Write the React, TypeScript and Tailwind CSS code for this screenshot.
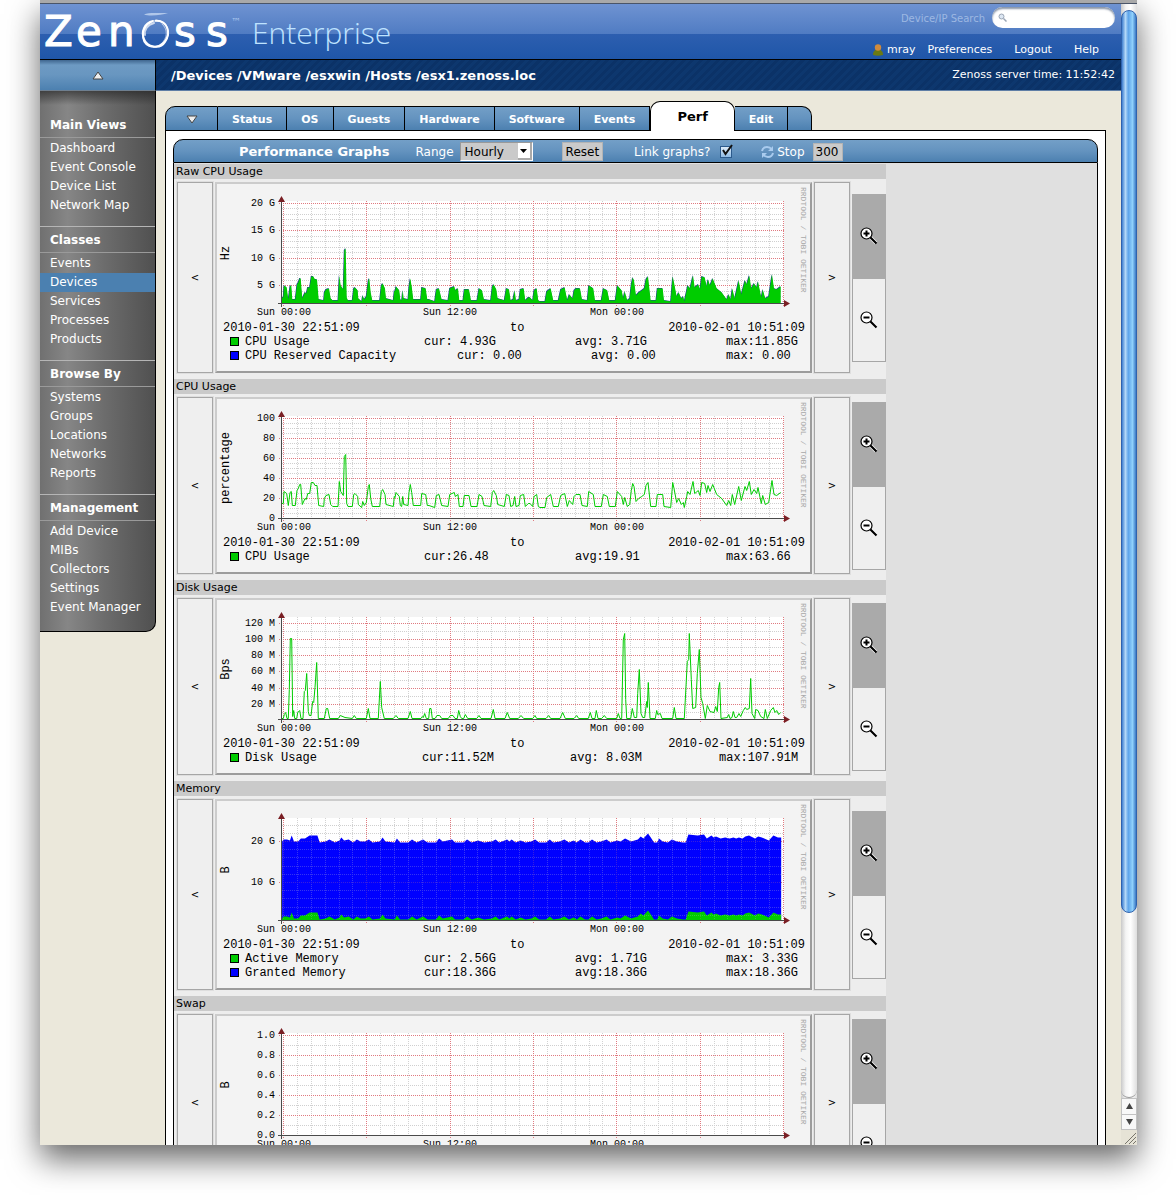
import React from "react";

type Point = [number, number];

interface Series {
  kind: "area" | "line";
  color: string;
  points: Point[];
}

interface LegendRow {
  color: string;
  name: string;
  cur: [number, string];
  avg: [number, string];
  max: [number, string];
}

interface Graph {
  title: string;
  unit: string;
  height: number;
  major: [number, string][];
  minorStep: number;
  series: Series[];
  legend: LegendRow[];
  gridOver?: boolean;
}

const GREEN = "#00cc00";
const BLUE = "#0000ff";
const LEFT = 65;
const RIGHT = 567;
const TOP = 17;
const BASE = 119;

// flat x,height list -> points inside the graph
const plot = (flat: number[], scale: number, shift: number): Point[] => {
  const out: Point[] = [];
  for (let i = 0; i < flat.length; i += 2) {
    out.push([flat[i] / scale + shift, flat[i + 1]]);
  }
  return out;
};

const raise = (points: Point[], by: number): Point[] =>
  points.map(([x, h]) => [x, Math.max(1, h + by)]);

const cpu: Point[] = [
  ...plot(
    [
      351, 15, 355, 15, 357, 27, 365, 25, 370, 13, 375, 26, 379, 27, 382, 13,
      391, 13, 396, 28, 400, 30, 404, 34, 407, 34, 412, 14, 420, 20, 424, 19,
      428, 25, 434, 25, 439, 36, 445, 36, 450, 33, 456, 33, 461, 13, 476, 12,
      478, 20, 483, 23, 492, 24, 497, 14, 503, 12, 519, 12, 523, 37, 527, 27,
      535, 23, 538, 62, 542, 64, 545, 15, 549, 12, 562, 12, 566, 24, 570, 25,
      578, 22, 580, 14, 590, 11, 593, 17, 598, 13, 604, 16, 610, 32, 613, 34,
      617, 20, 622, 12, 644, 12, 649, 27, 653, 29, 660, 24, 663, 14, 685, 12,
      688, 22, 690, 21, 693, 26, 703, 22, 706, 13, 710, 12, 713, 22, 716, 14,
      729, 13, 732, 26, 736, 34, 740, 26, 745, 13, 767, 13, 770, 25, 782, 24,
      787, 13, 792, 13, 809, 11, 814, 23, 822, 24, 830, 13, 849, 12, 854, 24,
      868, 26, 871, 22, 879, 24, 883, 12, 894, 12, 898, 23, 912, 23, 918, 12,
      936, 12, 942, 24, 951, 22, 957, 13, 977, 12, 982, 26, 986, 28, 994, 23,
      998, 14, 1018, 12, 1024, 24, 1032, 23, 1037, 12, 1044, 13, 1049, 22,
      1053, 12, 1062, 13, 1066, 23, 1076, 24, 1081, 12, 1090, 15, 1095, 15,
    ],
    3,
    -52
  ),
  ...plot(
    [
      8, 12, 12, 22, 20, 24, 25, 12, 30, 11, 45, 11, 50, 21, 62, 24, 70, 12,
      85, 12, 92, 23, 104, 25, 112, 12, 118, 18, 128, 14, 132, 22, 138, 24,
      150, 24, 156, 13, 172, 12, 176, 27, 190, 24, 195, 12, 214, 12, 220, 24,
      232, 22, 238, 12, 256, 12, 262, 27, 275, 22, 280, 14, 284, 21, 292, 12,
      299, 14, 304, 28, 308, 35, 312, 32, 318, 17, 326, 20, 335, 22, 343, 24,
      348, 33, 354, 36, 362, 12, 378, 12, 382, 24, 398, 24, 402, 12, 422, 11,
      428, 36, 432, 30, 440, 16, 446, 20, 454, 14, 460, 16, 463, 11, 470, 22,
      473, 27, 480, 24, 489, 37, 494, 25, 505, 28, 510, 23, 515, 36, 524, 35,
      530, 26, 534, 33, 540, 27, 548, 34, 560, 24, 575, 20, 590, 13, 596, 18,
      602, 13, 607, 24, 614, 14, 626, 32, 634, 18, 645, 32, 650, 28, 658, 37,
      664, 24, 672, 29, 680, 25, 684, 31, 694, 15, 698, 23, 706, 14, 716, 16,
      726, 38, 732, 24, 740, 23, 752, 26,
    ],
    3,
    313
  ),
];

const disk: Point[] = [
  ...plot(
    [
      351, 1, 355, 1, 358, 5, 362, 7, 366, 1, 370, 1, 373, 30, 376, 81, 380,
      81, 383, 3, 386, 9, 389, 1, 395, 1, 398, 7, 404, 9, 408, 1, 414, 1, 418,
      28, 421, 29, 425, 46, 430, 8, 433, 4, 438, 4, 443, 18, 446, 17, 450, 32,
      455, 57, 460, 1, 478, 1, 484, 11, 488, 11, 494, 1, 520, 1, 526, 4, 540,
      2, 562, 1, 568, 4, 574, 1, 604, 1, 610, 11, 615, 1, 640, 1, 646, 38,
      650, 12, 658, 1, 685, 1, 693, 4, 700, 1, 729, 1, 736, 8, 741, 1, 768, 1,
      772, 3, 775, 2, 779, 6, 784, 1, 791, 1, 794, 11, 798, 11, 802, 1, 810,
      1, 816, 4, 824, 4, 830, 1, 850, 1, 856, 4, 864, 4, 870, 1, 877, 1, 881,
      9, 886, 3, 890, 1, 896, 1, 901, 5, 908, 1, 935, 1, 942, 4, 948, 1, 978,
      1, 985, 10, 990, 1, 1020, 1, 1027, 7, 1034, 1, 1060, 1, 1068, 4, 1076,
      1, 1095, 1,
    ],
    3,
    -52
  ),
  ...plot(
    [
      8, 1, 15, 4, 20, 1, 48, 1, 56, 4, 62, 1, 90, 1, 98, 7, 106, 1, 132, 1,
      140, 4, 146, 1, 175, 1, 181, 7, 186, 1, 195, 1, 199, 9, 204, 1, 215, 1,
      223, 4, 230, 1, 260, 1, 265, 6, 270, 1, 275, 1, 280, 80, 284, 86, 287,
      20, 290, 1, 302, 1, 307, 11, 313, 2, 320, 2, 323, 26, 328, 50, 333, 6,
      338, 2, 344, 2, 350, 18, 352, 12, 355, 37, 360, 1, 376, 1, 380, 9, 383,
      5, 391, 6, 396, 1, 428, 1, 433, 12, 438, 1, 463, 1, 472, 58, 476, 60,
      478, 86, 484, 40, 488, 11, 497, 12, 502, 46, 508, 70, 513, 22, 518, 16,
      526, 1, 532, 14, 540, 8, 552, 7, 557, 13, 562, 8, 566, 32, 569, 37, 573,
      1, 592, 2, 596, 5, 600, 1, 606, 2, 610, 8, 615, 2, 620, 2, 627, 6, 632,
      3, 640, 9, 646, 12, 650, 10, 658, 11, 662, 41, 666, 6, 674, 1, 677, 10,
      684, 9, 692, 3, 702, 1, 706, 10, 712, 1, 722, 9, 730, 12, 735, 7, 740,
      9, 746, 5, 752, 7,
    ],
    3,
    313
  ),
];

const memory = plot(
  [
    255, 2, 258, 4, 266, 4, 272, 3, 276, 8, 281, 2, 290, 2, 296, 5, 305, 5,
    315, 8, 332, 8, 337, 1, 350, 2, 358, 4, 370, 1, 380, 3, 384, 6, 390, 3,
    400, 4, 410, 1, 418, 4, 426, 2, 436, 2, 444, 4, 452, 1, 468, 2, 474, 6,
    480, 2, 500, 1, 505, 5, 512, 1, 530, 1, 538, 4, 548, 1, 562, 4, 572, 1,
    590, 1, 597, 5, 605, 2, 625, 4, 632, 1, 650, 1, 658, 4, 668, 1, 682, 3,
    695, 1, 712, 2, 720, 4, 728, 1, 745, 4, 750, 2, 755, 4, 764, 1, 775, 3,
    785, 1, 798, 2, 806, 4, 815, 1, 830, 1, 838, 4, 846, 1, 860, 2, 870, 4,
    880, 1, 890, 3, 897, 1, 905, 4, 915, 1, 922, 1, 930, 4, 940, 1, 950, 2,
    962, 4, 970, 1, 985, 3, 992, 2, 1002, 5, 1015, 2, 1030, 4, 1036, 7, 1042,
    5, 1052, 10, 1058, 6, 1065, 1, 1072, 1, 1076, 5, 1084, 2, 1095, 1, 1104,
    4, 1115, 2, 1128, 1, 1134, 1, 1140, 9, 1160, 8, 1174, 9, 1180, 5, 1190, 8,
    1195, 6, 1200, 7, 1210, 5, 1220, 6, 1230, 5, 1238, 6, 1244, 5, 1250, 6,
    1258, 5, 1264, 7, 1272, 8, 1285, 5, 1292, 7, 1300, 6, 1315, 3, 1325, 8,
    1335, 6, 1342, 6,
  ],
  2.178,
  -52
);

const graphs: Graph[] = [
  {
    title: "Raw CPU Usage",
    unit: "Hz",
    height: 187,
    major: [
      [19, "20 G"],
      [46, "15 G"],
      [74, "10 G"],
      [101, "5 G"],
    ],
    minorStep: 5.47,
    series: [
      {
        kind: "area",
        color: "#1f3f8f",
        points: raise(cpu, -9).map(([x, h]) => [Math.max(LEFT, x - 0.5), h + 0.5]),
      },
      { kind: "area", color: GREEN, points: raise(cpu, -9) },
    ],
    legend: [
      {
        color: GREEN,
        name: "CPU Usage",
        cur: [207, "cur: 4.93G"],
        avg: [358, "avg: 3.71G"],
        max: [509, "max:11.85G"],
      },
      {
        color: BLUE,
        name: "CPU Reserved Capacity",
        cur: [240, "cur: 0.00"],
        avg: [374, "avg: 0.00"],
        max: [509, "max: 0.00"],
      },
    ],
  },
  {
    title: "CPU Usage",
    unit: "percentage",
    height: 173,
    major: [
      [19, "100"],
      [39, "80"],
      [59, "60"],
      [79, "40"],
      [99, "20"],
      [119, "0"],
    ],
    minorStep: 5,
    series: [{ kind: "line", color: GREEN, points: cpu }],
    legend: [
      {
        color: GREEN,
        name: "CPU Usage",
        cur: [207, "cur:26.48"],
        avg: [358, "avg:19.91"],
        max: [509, "max:63.66"],
      },
    ],
  },
  {
    title: "Disk Usage",
    unit: "Bps",
    height: 173,
    major: [
      [23, "120 M"],
      [39, "100 M"],
      [55, "80 M"],
      [71, "60 M"],
      [88, "40 M"],
      [104, "20 M"],
    ],
    minorStep: 8.1,
    series: [{ kind: "line", color: GREEN, points: disk }],
    legend: [
      {
        color: GREEN,
        name: "Disk Usage",
        cur: [205, "cur:11.52M"],
        avg: [353, "avg: 8.03M"],
        max: [502, "max:107.91M"],
      },
    ],
  },
  {
    title: "Memory",
    unit: "B",
    height: 187,
    major: [
      [40, "20 G"],
      [81, "10 G"],
    ],
    minorStep: 8.2,
    series: [
      { kind: "area", color: BLUE, points: raise(memory, 77) },
      { kind: "area", color: GREEN, points: memory },
    ],
    legend: [
      {
        color: GREEN,
        name: "Active Memory",
        cur: [207, "cur: 2.56G"],
        avg: [358, "avg: 1.71G"],
        max: [509, "max: 3.33G"],
      },
      {
        color: BLUE,
        name: "Granted Memory",
        cur: [207, "cur:18.36G"],
        avg: [358, "avg:18.36G"],
        max: [509, "max:18.36G"],
      },
    ],
    gridOver: true,
  },
  {
    title: "Swap",
    unit: "B",
    height: 173,
    major: [
      [19, "1.0"],
      [39, "0.8"],
      [59, "0.6"],
      [79, "0.4"],
      [99, "0.2"],
      [119, "0.0"],
    ],
    minorStep: 10,
    series: [
      {
        kind: "line",
        color: "#006600",
        points: [
          [LEFT, 0],
          [564, 0],
        ],
      },
    ],
    legend: [],
  },
];

const menu = [
  {
    heading: "Main Views",
    items: ["Dashboard", "Event Console", "Device List", "Network Map"],
  },
  {
    heading: "Classes",
    items: ["Events", "Devices", "Services", "Processes", "Products"],
  },
  {
    heading: "Browse By",
    items: ["Systems", "Groups", "Locations", "Networks", "Reports"],
  },
  {
    heading: "Management",
    items: ["Add Device", "MIBs", "Collectors", "Settings", "Event Manager"],
  },
];

const tabs = [
  "Status",
  "OS",
  "Guests",
  "Hardware",
  "Software",
  "Events",
  "Perf",
  "Edit",
];

const toPath = ({ kind, points }: Series) => {
  const line = points
    .map(([x, h]) => `${x.toFixed(1)},${(BASE + 0.5 - h).toFixed(1)}`)
    .join("L");
  if (kind === "line") return `M${line}`;
  const last = points[points.length - 1][0];
  return `M${points[0][0]},${BASE + 0.5}L${line}L${last},${BASE + 0.5}Z`;
};

const Grid: React.FC<{ graph: Graph; faint?: boolean }> = ({ graph, faint }) => {
  const hours = Array.from({ length: 37 }, (_, i) => i);
  const first = graph.major[0][0];
  const minor: number[] = [];
  for (let y = first; y > TOP; y -= graph.minorStep) minor.push(Math.round(y));
  for (let y = first; y < BASE; y += graph.minorStep) minor.push(Math.round(y));
  const majorRows = graph.major.map(([y]) => y);
  const nearMajor = (y: number) => majorRows.some((m) => Math.abs(m - y) < 2);

  return (
    <g strokeDasharray="1 1" fill="none" opacity={faint ? 0.25 : 1}>
      {minor
        .filter((y) => !nearMajor(y))
        .map((y, i) => (
          <path key={i} d={`M${LEFT},${y + 0.5}H${RIGHT}`} stroke="#cfcfcf" />
        ))}
      {hours.map((h) => {
        const x = Math.round(66 + h * 13.89) + 0.5;
        const major = h % 6 === 0;
        return (
          <path
            key={h}
            d={`M${x},${TOP}V${BASE + (major ? 3 : 1)}`}
            stroke={major ? "#e07a80" : "#d2d2d2"}
          />
        );
      })}
      {majorRows.map((y) => (
        <path key={y} d={`M${LEFT - 3},${y + 0.5}H${RIGHT}`} stroke="#e07a80" />
      ))}
    </g>
  );
};

const GraphImage: React.FC<{ graph: Graph }> = ({ graph }) => (
  <svg
    width="593"
    height={graph.height}
    viewBox={`0 0 593 ${graph.height}`}
    className="block font-['Liberation_Mono',monospace]"
  >
    <rect x={LEFT} y={TOP} width={RIGHT - LEFT} height={BASE - TOP} fill="#fff" />
    <Grid graph={graph} />
    {graph.series.map((s, i) => (
      <path
        key={i}
        d={toPath(s)}
        fill={s.kind === "area" ? s.color : "none"}
        stroke={s.kind === "line" ? s.color : "none"}
      />
    ))}
    {graph.gridOver && <Grid graph={graph} faint />}
    <path
      d={`M${LEFT - 4},${BASE + 0.5}H570M${LEFT - 0.5},${BASE + 4}V14`}
      stroke="#4a4a4a"
      fill="none"
    />
    <path d="M64.5,12l3.500,6h-7zM573,119.5l-6,-3.500v7z" fill="#7a1f24" />

    {graph.major.map(([y, label]) => (
      <text key={y} x="58" y={y + 3} textAnchor="end" className="text-[10px]">
        {label}
      </text>
    ))}
    <g textAnchor="middle" className="text-[10px]">
      <text x="67" y="131">Sun 00:00</text>
      <text x="233" y="131">Sun 12:00</text>
      <text x="400" y="131">Mon 00:00</text>
    </g>
    <text transform="translate(12 69) rotate(-90)" textAnchor="middle" className="text-[12px]">
      {graph.unit}
    </text>
    <text transform="translate(584 3) rotate(90)" className="fill-[#a8a8a8] text-[8px]">
      RRDTOOL / TOBI OETIKER
    </text>

    <g className="text-[12px]">
      <text x="6" y="147">2010-01-30 22:51:09</text>
      <text x="293" y="147">to</text>
      <text x="588" y="147" textAnchor="end">2010-02-01 10:51:09</text>
      {graph.legend.map((row, i) => (
        <g key={row.name}>
          <rect x="13.5" y={153.5 + i * 14} width="8" height="8" fill={row.color} stroke="#000" />
          <text x="28" y={161 + i * 14}>{row.name}</text>
          {[row.cur, row.avg, row.max].map(([x, value]) => (
            <text key={value} x={x} y={161 + i * 14}>{value}</text>
          ))}
        </g>
      ))}
    </g>
  </svg>
);

const Magnifier: React.FC<{ plus?: boolean }> = ({ plus }) => (
  <svg width="18" height="18" viewBox="0 0 18 18">
    <path d="M10,10L16,16" stroke="#fff" strokeWidth="3.5" />
    <path d="M10,10L16.5,16.5" stroke="#000" strokeWidth="2.2" />
    <circle cx="6.5" cy="6.5" r="5.5" fill="#fff" stroke="#000" strokeWidth="1.2" />
    <path d={plus ? "M3.5,6.5h6M6.5,3.5v6" : "M3.5,6.5h6"} stroke="#000" strokeWidth="2" />
  </svg>
);

const GraphRow: React.FC<{ graph: Graph }> = ({ graph }) => (
  <section className="w-[712px] bg-[#ededed]">
    <h3 className="h-[15px] bg-[#cacaca] pl-0.5 text-[11px] leading-4">
      {graph.title}
    </h3>
    <div className="flex gap-0.5 pt-[3px] pb-1.5 pl-[3px]">
      <button
        type="button"
        className="w-9 border border-[#a6a6a6] bg-[#efefef] text-[10px] outline outline-[#dedede]"
      >
        &lt;
      </button>
      <div className="border-2 border-t-[#cccccc] border-r-[#9c9c9c] border-b-[#9c9c9c] border-l-[#cccccc] bg-[#f3f3f3]">
        <GraphImage graph={graph} />
      </div>
      <button
        type="button"
        className="w-9 border border-[#a6a6a6] bg-[#efefef] text-[10px] outline outline-[#dedede]"
      >
        &gt;
      </button>
      <div className="flex flex-1 flex-col justify-center">
        <button
          type="button"
          aria-label="Zoom in"
          className="flex h-[85px] items-center justify-center bg-[#aaaaaa]"
        >
          <Magnifier plus />
        </button>
        <button
          type="button"
          aria-label="Zoom out"
          className="flex h-[83px] items-center justify-center border border-t-0 border-[#a6a6a6] bg-[#efefef]"
        >
          <Magnifier />
        </button>
      </div>
    </div>
  </section>
);

const Logo: React.FC = () => (
  <svg width="360" height="55" viewBox="0 0 360 55" className="block">
    <g fill="#fff" stroke="#fff" className="font-['DejaVu_Sans',sans-serif] text-[42px]">
      <text x="2 34 66" y="42">Zen</text>
      <text x="132 164" y="42">ss</text>
    </g>
    {/* brushed ring standing in for the "o" */}
    <g fill="none" stroke="#fff" strokeLinecap="round">
      <path d="M111,17C102,19 99,28 102,35C105,43 118,46 123,38C129,29 126,17 114,16.5" strokeWidth="2" />
      <path d="M109,18C99,23 98,38 107,42C117,46 127,36 126,27C125,20 120,16 113,17" strokeWidth="1.5" />
      <path d="M112,19C105,21 102,26 103,31" strokeWidth="2" opacity=".7" />
      <path d="M120,20C126,25 126,34 119,40" strokeWidth="1" opacity=".6" />
    </g>
    <path d="M102,10.500C107,8 117,9.500 126,9C120,11 108,12.500 102,10.500Z" fill="#c9dbf3" opacity=".75" />
    <text x="189" y="21" className="fill-[#a9c6ee] font-['DejaVu_Sans',sans-serif] text-[10px]">™</text>
    <text x="210" y="40" className="fill-[#bfe3ff] font-['Open_Sans',sans-serif] text-[30px] font-light">
      Enterprise
    </text>
  </svg>
);

const Header: React.FC = () => (
  <header className="flex h-14 justify-between border-b border-black bg-[linear-gradient(#6f93d2,#507cc3_54%,#2d5fb0_54%,#1f56a8)] pl-0.5">
    <Logo />
    <div className="pr-1.5 text-[11px] text-white">
      <form className="mt-[3px] flex items-center justify-end gap-[7px]">
        <label htmlFor="search" className="pt-0.5 text-[10px] text-[#9db8e2]">
          Device/IP Search
        </label>
        <div className="relative">
          <input
            id="search"
            type="text"
            className="block h-[21px] w-[123px] rounded-full bg-white pr-3 pl-5 text-black shadow-[inset_0_2px_2px_#8a96a8] outline-none"
          />
          <svg width="9" height="9" viewBox="0 0 9 9" className="absolute top-1.5 left-1.5">
            <circle cx="3.500" cy="3.500" r="2.500" fill="#dce6f2" stroke="#9aa5b5" />
            <path d="M5.500,5.500L8.500,8.500" stroke="#9aa5b5" strokeWidth="1.500" />
          </svg>
        </div>
      </form>
      <nav className="mt-3.5 flex items-center justify-end pr-4 leading-4">
        <svg width="10" height="12" viewBox="0 0 10 12" className="mr-1">
          <path d="M0,11Q0,5.500 5,5.500Q10,5.500 10,11Q5,12.500 0,11Z" fill="#6b7a12" />
          <circle cx="5" cy="3.500" r="3.200" fill="#d08a3c" />
        </svg>
        <a href="#user" className="mr-3">mray</a>
        <a href="#preferences" className="mr-[22px]">Preferences</a>
        <a href="#logout" className="mr-[22px]">Logout</a>
        <a href="#help">Help</a>
      </nav>
    </div>
  </header>
);

const Sidebar: React.FC = () => (
  <nav className="w-29 shrink-0 self-start overflow-hidden rounded-br-[10px] border-r border-b border-black bg-[linear-gradient(rgba(30,30,30,.6),transparent_14px),linear-gradient(90deg,#707070,#868686_24%,#6d6d6d_55%,#505050)] pt-[21px] pb-[3px] text-[12px] text-white">
    {menu.map((group, i) => (
      <div key={group.heading} className={i > 0 ? "border-t border-[#b5b5b5]" : ""}>
        <h2 className="h-[26px] border-b border-[#9a9a9a] pl-2.5 leading-[26px] font-bold">
          {group.heading}
        </h2>
        <ul className="pt-px pb-[11px]">
          {group.items.map((item) => (
            <li key={item}>
              <a
                href="#menu"
                className={
                  item === "Devices"
                    ? "block bg-[#4b80b0] pl-2.5 leading-[19px] whitespace-nowrap"
                    : "block pl-2.5 leading-[19px] whitespace-nowrap"
                }
              >
                {item}
              </a>
            </li>
          ))}
        </ul>
      </div>
    ))}
  </nav>
);

const Tabs: React.FC = () => (
  <div className="relative -mb-px flex h-10 items-end text-[11px] font-bold text-white">
    <button
      type="button"
      aria-label="Tab menu"
      className="flex h-[25px] w-[53px] items-center justify-center rounded-tl-[10px] border border-black bg-[linear-gradient(#739fc7,#6493bf_50%,#4c80b0)] pt-0.5"
    >
      <svg width="12" height="9" viewBox="0 0 12 9">
        <path d="M1,1H11L6,8Z" fill="#eee" stroke="#444" />
      </svg>
    </button>
    {tabs.map((tab) =>
      tab === "Perf" ? (
        <a
          key={tab}
          href="#perf"
          className="flex h-[30px] items-center rounded-t-[10px] border border-b-0 border-black bg-white px-[26px] text-[13px] text-black"
        >
          {tab}
        </a>
      ) : (
        <a
          key={tab}
          href="#tab"
          className="flex h-[25px] items-center border-y border-r border-black bg-[linear-gradient(#739fc7,#6493bf_50%,#4c80b0)] px-3.5 pt-1"
        >
          {tab}
        </a>
      )
    )}
    <div className="h-[25px] w-6 rounded-tr-[10px] border-y border-r border-black bg-[linear-gradient(#739fc7,#6493bf_50%,#4c80b0)]" />
  </div>
);

const Toolbar: React.FC = () => (
  <div className="flex h-6 items-center rounded-t-[10px] border border-black bg-[linear-gradient(#739fc7,#6493bf_50%,#4c80b0)] pt-px pl-[65px] text-[12px] text-white">
    <h2 className="mr-[26px] text-[13px] font-bold">Performance Graphs</h2>
    <label htmlFor="range" className="mr-1.5">Range</label>
    <div className="relative mr-[29px]">
      <select
        id="range"
        className="block h-[19px] w-[73px] appearance-none border border-t-[#999] border-r-white border-b-white border-l-[#999] bg-[#cacaca] pl-1 leading-[16px] text-black"
      >
        <option>Hourly</option>
        <option>Daily</option>
      </select>
      <span className="pointer-events-none absolute top-px right-px flex h-[17px] w-3.5 items-center justify-center border-r-2 border-b-2 border-[#aaa] bg-white">
        <svg width="7" height="4" viewBox="0 0 7 4">
          <path d="M0,0H7L3.500,4Z" />
        </svg>
      </span>
    </div>
    <button type="button" className="mr-[31px] h-[19px] border border-[#b4b4b4] bg-[#cacaca] px-[3px] leading-[16px] text-black">
      Reset
    </button>
    <label htmlFor="link" className="mr-2.5">Link graphs?</label>
    <span className="relative mr-7">
      <input
        id="link"
        type="checkbox"
        defaultChecked
        className="block h-3 w-3 appearance-none border border-[#2c5a8c] bg-[linear-gradient(#ddebf8,#8fbce6)]"
      />
      <svg width="13" height="13" viewBox="0 0 13 13" className="pointer-events-none absolute -top-0.5 left-0">
        <path d="M3,6L5.500,10L12,1" fill="none" stroke="#111" strokeWidth="2" />
      </svg>
    </span>
    <svg width="15" height="14" viewBox="0 0 15 14" className="mr-0.5" fill="none" stroke="#a9cbee" strokeWidth="2">
      <path d="M2,6Q3,2 7,2Q10,2 12,4.500" />
      <path d="M13,8Q12,12 8,12Q5,12 3,9.500" />
      <path d="M13,1v5h-5zM2,13v-5h5z" fill="#a9cbee" stroke="none" />
    </svg>
    <label htmlFor="refresh" className="mr-2">Stop</label>
    <input
      id="refresh"
      type="text"
      defaultValue="300"
      className="h-[18px] w-[30px] border border-[#b4b4b4] bg-[#cacaca] pl-0.5 text-black outline-none"
    />
  </div>
);

const Scrollbar: React.FC = () => (
  <div className="flex w-4 shrink-0 flex-col bg-[linear-gradient(90deg,#c9c9c9,#f4f4f4_30%,#ffffff_60%,#dedede)] pt-1.5">
    <div className="h-[903px] rounded-full border border-[#2f62ad] bg-[linear-gradient(90deg,#3f7fd0,#b3d8f8_25%,#5ea4ea_45%,#8fd0fb_75%,#3a78c4)]" />
    <div className="flex-1 rounded-b-full border-b border-[#999]" />
    <div className="flex h-8 flex-col border border-[#c2c2c2] bg-[#f8f8f8]">
      <button type="button" aria-label="Scroll up" className="flex flex-1 items-center justify-center border-b border-[#c2c2c2]">
        <svg width="7" height="6" viewBox="0 0 7 6"><path d="M3.500,0L7,6H0Z" fill="#444" /></svg>
      </button>
      <button type="button" aria-label="Scroll down" className="flex flex-1 items-center justify-center">
        <svg width="7" height="6" viewBox="0 0 7 6"><path d="M0,0H7L3.500,6Z" fill="#444" /></svg>
      </button>
    </div>
    <svg width="16" height="15" viewBox="0 0 16 15" className="bg-[#e6e3d6]">
      <path d="M4,14L15,3M8,14L15,7M12,14L15,11" stroke="#77756b" />
    </svg>
  </div>
);

const App: React.FC = () => (
  <div className="flex h-screen overflow-hidden bg-white pr-[39px] pb-[55px] pl-10 font-['DejaVu_Sans',sans-serif] text-black">
    <div className="flex min-w-0 flex-1 flex-col shadow-[0_14px_30px_rgba(0,0,0,.6)]">
      {/* bottom edge of the window title bar */}
      <div className="h-1 shrink-0 border-b border-[#4a5568] bg-[#a9a9a9]" />
      <div className="flex min-h-0 flex-1">
        <div className="flex min-w-0 flex-1 flex-col overflow-hidden bg-[#ebe8db]">
          <Header />
          <div className="flex h-[31px] shrink-0">
            <button
              type="button"
              aria-label="Collapse menu"
              className="flex w-29 shrink-0 items-center justify-center border-r border-b border-r-black border-b-[#6f7f8f] bg-[linear-gradient(#3f668f,#6d9ac3_5px,#6896c0_50%,#4c80b0)]"
            >
              <svg width="12" height="9" viewBox="0 0 12 9">
                <path d="M6,1L11,8H1Z" fill="#eee" stroke="#444" />
              </svg>
            </button>
            <div className="flex flex-1 items-center justify-between border-b border-[#5f7ea6] bg-[repeating-linear-gradient(135deg,#0b3267_0_3px,#0d376e_3px_6px)] pr-1.5 pl-[15px] text-white">
              <p className="pt-0.5 text-[13px] font-bold">
                <a href="#devices">/Devices</a> <a href="#vmware">/VMware</a>{" "}
                <a href="#esxwin">/esxwin</a> <a href="#hosts">/Hosts</a>{" "}
                <a href="#esx1">/esx1.zenoss.loc</a>
              </p>
              <p className="text-[11px]">Zenoss server time: 11:52:42</p>
            </div>
          </div>
          <div className="flex min-h-0 flex-1">
            <Sidebar />
            <main className="flex min-w-0 flex-1 flex-col pr-[15px] pl-[9px]">
              <Tabs />
              <div className="min-h-0 flex-1 overflow-hidden border border-b-0 border-black bg-white px-[7px] pt-2">
                <Toolbar />
                <div className="border-x border-black bg-[#e0e0e0] pt-px pb-10">
                  {graphs.map((graph) => (
                    <GraphRow key={graph.title} graph={graph} />
                  ))}
                </div>
              </div>
            </main>
          </div>
        </div>
        <Scrollbar />
      </div>
    </div>
  </div>
);

export default App;
